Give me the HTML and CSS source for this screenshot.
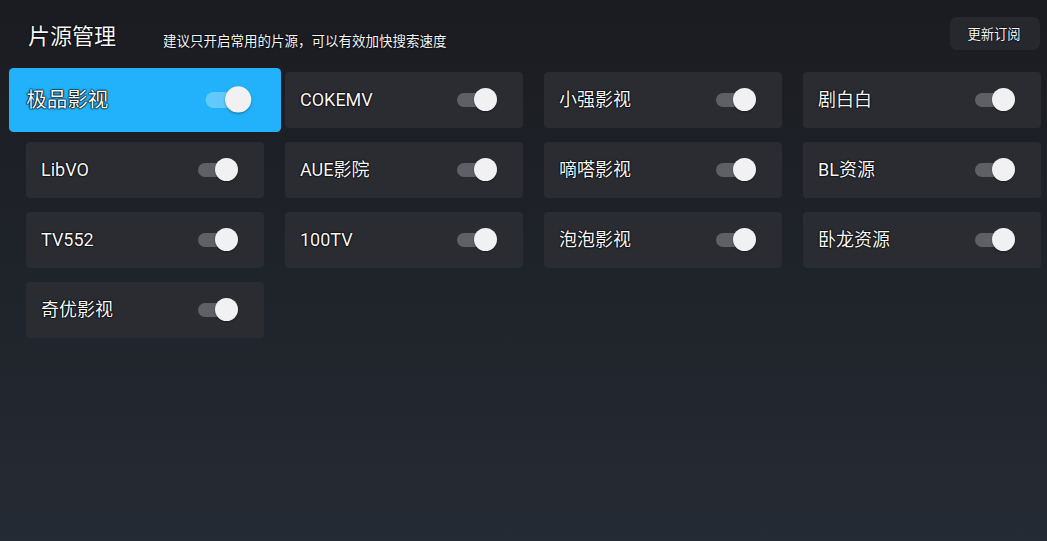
FILE: index.html
```html
<!DOCTYPE html>
<html lang="zh">
<head>
<meta charset="utf-8">
<title>片源管理</title>
<link rel="stylesheet" href="styles.css">
</head>
<body>
<div class="page">
  <header class="header">
    <h1 class="title">片源管理</h1>
    <p class="subtitle">建议只开启常用的片源，可以有效加快搜索速度</p>
    <button class="update-btn">更新订阅</button>
  </header>
  <main class="grid">
    <div class="card focused"><span class="name">极品影视</span><span class="switch"><span class="track"></span><span class="knob"></span></span></div>
    <div class="card"><span class="name">COKEMV</span><span class="switch"><span class="track"></span><span class="knob"></span></span></div>
    <div class="card"><span class="name">小强影视</span><span class="switch"><span class="track"></span><span class="knob"></span></span></div>
    <div class="card"><span class="name">剧白白</span><span class="switch"><span class="track"></span><span class="knob"></span></span></div>
    <div class="card"><span class="name">LibVO</span><span class="switch"><span class="track"></span><span class="knob"></span></span></div>
    <div class="card"><span class="name">AUE影院</span><span class="switch"><span class="track"></span><span class="knob"></span></span></div>
    <div class="card"><span class="name">嘀嗒影视</span><span class="switch"><span class="track"></span><span class="knob"></span></span></div>
    <div class="card"><span class="name">BL资源</span><span class="switch"><span class="track"></span><span class="knob"></span></span></div>
    <div class="card"><span class="name">TV552</span><span class="switch"><span class="track"></span><span class="knob"></span></span></div>
    <div class="card"><span class="name">100TV</span><span class="switch"><span class="track"></span><span class="knob"></span></span></div>
    <div class="card"><span class="name">泡泡影视</span><span class="switch"><span class="track"></span><span class="knob"></span></span></div>
    <div class="card"><span class="name">卧龙资源</span><span class="switch"><span class="track"></span><span class="knob"></span></span></div>
    <div class="card"><span class="name">奇优影视</span><span class="switch"><span class="track"></span><span class="knob"></span></span></div>
  </main>
</div>
</body>
</html>
```
FILE: styles.css
```css
html, body {
  margin: 0;
  padding: 0;
  height: 100%;
}
body {
  background: linear-gradient(to bottom, #1a1c21 0%, #1c1e23 15%, #1f232a 50%, #252b34 100%);
  font-family: Roboto, "Noto Sans CJK SC", sans-serif;
  color: #f6f6f6;
  overflow: hidden;
}
.page {
  padding: 17px 7px 0 26px;
}
.header {
  display: flex;
  align-items: center;
  height: 33px;
}
.title {
  margin: 0 0 0 2px;
  font-size: 22px;
  font-weight: 400;
  line-height: 1;
  position: relative;
  top: 3px;
  text-shadow: 0 0 2px #000, 0 0 1px #000, 0 0 1px #000;
}
.subtitle {
  margin: 0 0 0 47px;
  font-size: 13.5px;
  line-height: 1;
  position: relative;
  top: 8px;
  text-shadow: 0 0 2px #000, 0 0 1px #000;
}
.update-btn {
  margin-left: auto;
  width: 90px;
  height: 33px;
  border: none;
  border-radius: 7px;
  background: #26282e;
  color: #f6f6f6;
  font-family: Roboto, "Noto Sans CJK SC", sans-serif;
  font-size: 13.3px;
  padding: 0 2px 0 0;
  text-shadow: 0 0 2px #000, 0 0 1px #000;
}
.grid {
  margin-top: 22px;
  margin-right: -1px;
  display: grid;
  grid-template-columns: repeat(4, 238px);
  grid-auto-rows: 56px;
  column-gap: 21px;
  row-gap: 14px;
}
.card {
  display: flex;
  align-items: center;
  justify-content: space-between;
  padding: 0 26px 0 15px;
  background: #2a2c32;
  border-radius: 4px;
}
.name {
  font-size: 18px;
  line-height: 1;
  text-shadow: 0 0 2px #000, 0 0 1px #000, 0 0 1px #000, 0 0 1px #000;
}
.switch {
  position: relative;
  width: 40px;
  height: 24px;
}
.track {
  position: absolute;
  left: 0;
  top: 5px;
  width: 36px;
  height: 14px;
  border-radius: 7px;
  background: #5e6065;
}
.knob {
  position: absolute;
  right: 0;
  top: 0;
  width: 23px;
  height: 23px;
  border-radius: 50%;
  background: #f1f1f3;
  box-shadow: 0 1px 2px rgba(0,0,0,0.35);
}
.card.focused {
  background: #21b2fb;
  transform: scale(1.143);
  position: relative;
  z-index: 1;
}
.card.focused .track {
  background: #62c9fd;
}
```
